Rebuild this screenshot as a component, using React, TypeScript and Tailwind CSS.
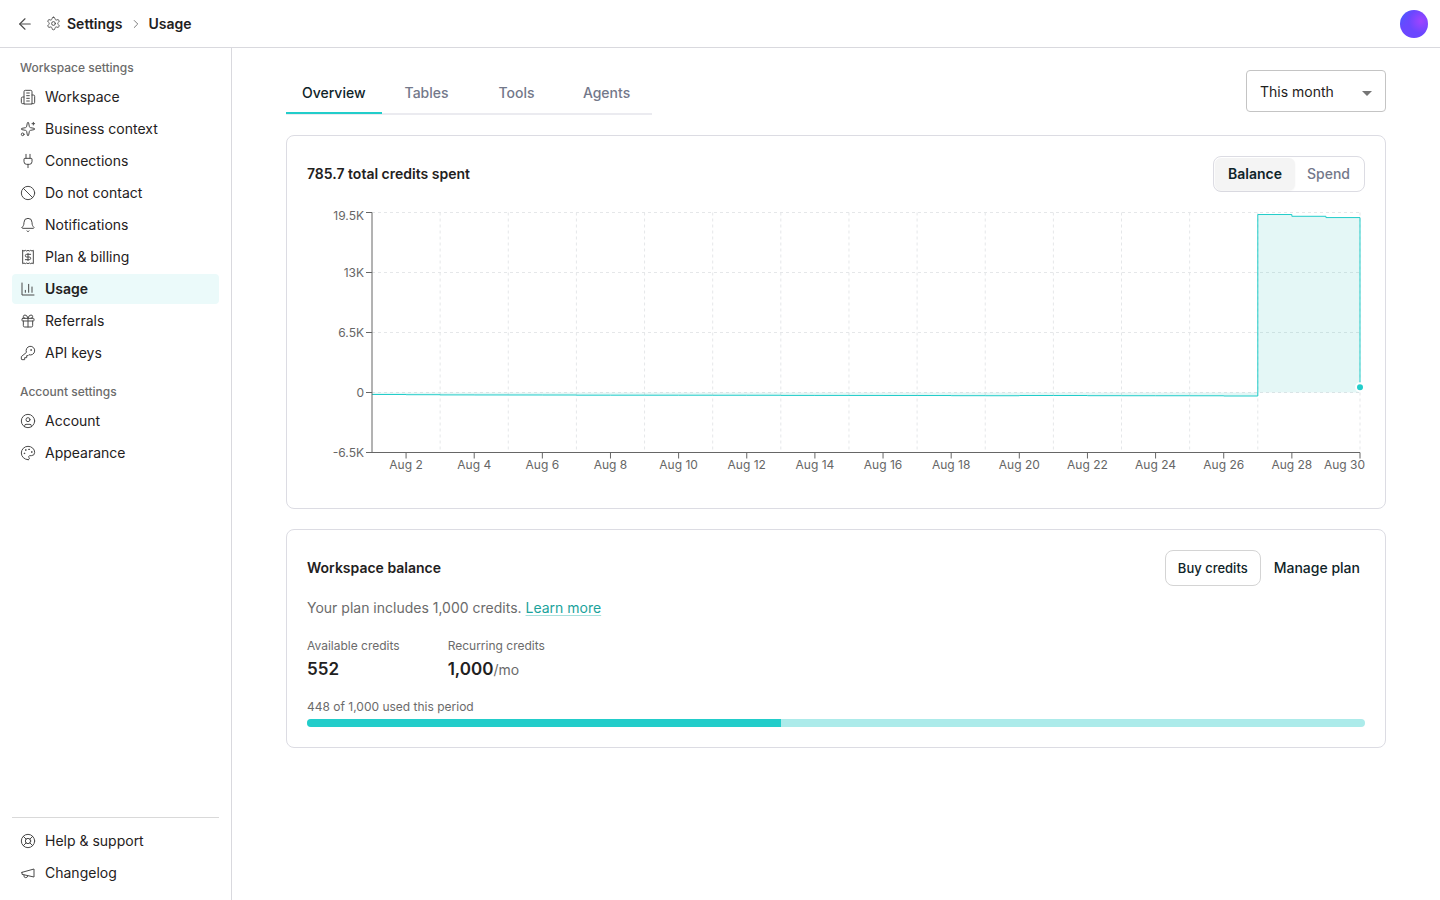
import { useState, type ReactNode } from "react";
import {
  ArrowLeft,
  Ban,
  Bell,
  ChevronRight,
  CircleUser,
  Gift,
  LifeBuoy,
  Palette,
  Plug,
  Sparkles,
} from "lucide-react";

function Glyph({ children, size = 16 }: { children: ReactNode; size?: number }) {
  return (
    <svg
      width={size}
      height={size}
      viewBox="0 0 24 24"
      fill="none"
      stroke="currentColor"
      strokeWidth="1.5"
      strokeLinecap="round"
      strokeLinejoin="round"
      aria-hidden="true"
    >
      {children}
    </svg>
  );
}

const gear = (
  <Glyph size={15}>
    <path d="M12.22 2h-.44a2 2 0 0 0-2 2v.18a2 2 0 0 1-1 1.73l-.43.25a2 2 0 0 1-2 0l-.15-.08a2 2 0 0 0-2.73.73l-.22.38a2 2 0 0 0 .73 2.73l.15.1a2 2 0 0 1 1 1.72v.51a2 2 0 0 1-1 1.74l-.15.09a2 2 0 0 0-.73 2.73l.22.38a2 2 0 0 0 2.73.73l.15-.08a2 2 0 0 1 2 0l.43.25a2 2 0 0 1 1 1.73V20a2 2 0 0 0 2 2h.44a2 2 0 0 0 2-2v-.18a2 2 0 0 1 1-1.73l.43-.25a2 2 0 0 1 2 0l.15.08a2 2 0 0 0 2.73-.73l.22-.39a2 2 0 0 0-.73-2.73l-.15-.08a2 2 0 0 1-1-1.74v-.5a2 2 0 0 1 1-1.74l.15-.09a2 2 0 0 0 .73-2.73l-.22-.38a2 2 0 0 0-2.73-.73l-.15.08a2 2 0 0 1-2 0l-.43-.25a2 2 0 0 1-1-1.73V4a2 2 0 0 0-2-2z" />
    <circle cx="12" cy="12" r="3" />
  </Glyph>
);

const building = (
  <Glyph>
    <path d="M6 22V4a2 2 0 0 1 2-2h8a2 2 0 0 1 2 2v18Z" />
    <path d="M6 12H4a2 2 0 0 0-2 2v6a2 2 0 0 0 2 2h2" />
    <path d="M18 9h2a2 2 0 0 1 2 2v9a2 2 0 0 1-2 2h-2" />
    <path d="M10 6h4M10 10h4M10 14h4M10 18h4" />
  </Glyph>
);

const receipt = (
  <Glyph>
    <path d="M4 2v20l2-1 2 1 2-1 2 1 2-1 2 1 2-1 2 1V2l-2 1-2-1-2 1-2-1-2 1-2-1-2 1Z" />
    <path d="M16 8h-6a2 2 0 1 0 0 4h4a2 2 0 1 1 0 4H8" />
    <path d="M12 17.5v-11" />
  </Glyph>
);

const chartColumn = (
  <Glyph>
    <path d="M3 3v18h18" />
    <path d="M18 17V9" />
    <path d="M13 17V5" />
    <path d="M8 17v-3" />
  </Glyph>
);

const key = (
  <Glyph>
    <path d="M2 18v3c0 .6.4 1 1 1h4v-3h3v-3h2l1.4-1.4a6.5 6.5 0 1 0-4-4Z" />
    <circle cx="16.5" cy="7.5" r=".5" fill="currentColor" />
  </Glyph>
);

const megaphone = (
  <Glyph>
    <path d="m3 11 18-5v12L3 14v-3z" />
    <path d="M11.6 16.8a3 3 0 1 1-5.8-1.6" />
  </Glyph>
);

const line = { size: 16, strokeWidth: 1.5, "aria-hidden": true } as const;

type Item = { label: string; icon: ReactNode; active?: boolean };

const workspaceItems: Item[] = [
  { label: "Workspace", icon: building },
  { label: "Business context", icon: <Sparkles {...line} /> },
  { label: "Connections", icon: <Plug {...line} /> },
  { label: "Do not contact", icon: <Ban {...line} /> },
  { label: "Notifications", icon: <Bell {...line} /> },
  { label: "Plan & billing", icon: receipt },
  { label: "Usage", icon: chartColumn, active: true },
  { label: "Referrals", icon: <Gift {...line} /> },
  { label: "API keys", icon: key },
];

const accountItems: Item[] = [
  { label: "Account", icon: <CircleUser {...line} /> },
  { label: "Appearance", icon: <Palette {...line} /> },
];

const footerItems: Item[] = [
  { label: "Help & support", icon: <LifeBuoy {...line} /> },
  { label: "Changelog", icon: megaphone },
];

function NavList({ items }: { items: Item[] }) {
  return (
    <ul className="flex flex-col gap-0.5">
      {items.map((item) => (
        <li key={item.label}>
          <a
            href="#"
            aria-current={item.active ? "page" : undefined}
            className={
              item.active
                ? "flex h-[30px] items-center gap-[9px] rounded bg-[#ebfafa] px-2 text-sm font-semibold text-[#1f2121]"
                : "flex h-[30px] items-center gap-[9px] rounded px-2 text-sm text-[#1f2121] hover:bg-gray-50"
            }
          >
            <span className="shrink-0 text-[#4a4a4a]">{item.icon}</span>
            {item.label}
          </a>
        </li>
      ))}
    </ul>
  );
}

// Plot geometry, in the chart's own units.
const LEFT = 65;
const RIGHT = 1053;
const TOP = 20.5;
const BOTTOM = 260.5;
const ZERO = 200.5;
const STEP = (RIGHT - LEFT) / 29;
const dayX = (day: number) => LEFT + (day - 1) * STEP;
const valueY = (value: number) => ZERO - (value / 6500) * 60;

// Closing balance for each day of August.
const balances = [
  -215, -240, -262, -266, -270, -274, -290, -292, -294, -296, -298, -300, -315, -318, -321, -324,
  -327, -345, -350, -325, -325, -345, -350, -352, -355, -380, 19280, 19090, 18950, 560,
];

const stepPath = balances
  .map((value, i) =>
    i === 0 ? `M${dayX(1)} ${valueY(value)}` : `H${dayX(i + 1)}V${valueY(value)}`,
  )
  .join("");

const yTicks = [
  { label: "19.5K", value: 19500, text: 24 },
  { label: "13K", value: 13000, text: 81 },
  { label: "6.5K", value: 6500, text: 141 },
  { label: "0", value: 0, text: 201 },
  { label: "-6.5K", value: -6500, text: 261 },
];

const gridDays = [3, 5, 7, 9, 11, 13, 15, 17, 19, 21, 23, 25, 27, 30];
const labelDays = [2, 4, 6, 8, 10, 12, 14, 16, 18, 20, 22, 24, 26, 28, 30];

function BalanceChart() {
  return (
    <svg
      viewBox="0 0 1058 296"
      className="block h-auto w-full overflow-visible"
      role="img"
      aria-label="Credit balance by day"
    >
      <g stroke="#e5e7e9" strokeDasharray="3 3">
        {yTicks.slice(0, 4).map((t) => (
          <line key={t.label} x1={LEFT} x2={RIGHT} y1={valueY(t.value)} y2={valueY(t.value)} />
        ))}
        {gridDays.map((d) => (
          <line key={d} x1={dayX(d)} x2={dayX(d)} y1={TOP} y2={BOTTOM} />
        ))}
      </g>
      <path d={`${stepPath}V${ZERO}H${LEFT}Z`} fill="#1ebcb8" fillOpacity="0.12" />
      <path d={stepPath} fill="none" stroke="#22cdca" strokeWidth="1" />
      <g stroke="#666666">
        <line x1={LEFT} x2={RIGHT} y1={BOTTOM} y2={BOTTOM} />
        <line x1={LEFT} x2={LEFT} y1={TOP} y2={BOTTOM} />
        {yTicks.map((t) => (
          <line key={t.label} x1={LEFT - 6} x2={LEFT} y1={valueY(t.value)} y2={valueY(t.value)} />
        ))}
        {labelDays.map((d) => (
          <line key={d} x1={dayX(d)} x2={dayX(d)} y1={BOTTOM} y2={BOTTOM + 6} />
        ))}
      </g>
      <g fill="#666666" fontSize="12">
        {yTicks.map((t) => (
          <text key={t.label} x={LEFT - 8} y={t.text + 4} textAnchor="end">
            {t.label}
          </text>
        ))}
        {labelDays.map((d) => (
          <text
            key={d}
            x={d === 30 ? 1058 : dayX(d)}
            y="277"
            textAnchor={d === 30 ? "end" : "middle"}
          >
            {`Aug ${d}`}
          </text>
        ))}
      </g>
      <circle cx={RIGHT} cy={valueY(560)} r="4" fill="#22cdca" stroke="#ffffff" strokeWidth="2" />
    </svg>
  );
}

const tabs = ["Overview", "Tables", "Tools", "Agents"];

export default function App() {
  const [tab, setTab] = useState("Overview");
  const [mode, setMode] = useState("Balance");
  const used = 448;
  const total = 1000;

  return (
    <div className="flex min-h-screen flex-col bg-white font-['Inter',sans-serif] text-sm text-[#1f2121]">
      <header className="flex h-12 items-center justify-between border-b border-[#d9d9de] px-3">
        <nav aria-label="Breadcrumb" className="flex items-center font-semibold">
          <button type="button" aria-label="Back" className="mr-2 p-1 text-[#4a4a4a]">
            <ArrowLeft size={18} strokeWidth={1.5} aria-hidden />
          </button>
          <a href="#" className="flex items-center gap-1.5">
            <span className="text-[#4a4a4a]">{gear}</span>
            Settings
          </a>
          <ChevronRight size={14} strokeWidth={1.5} className="mx-1.5 text-[#6b6b6b]" aria-hidden />
          <span aria-current="page">Usage</span>
        </nav>
        <button
          type="button"
          aria-label="Profile"
          className="size-7 rounded-full bg-[radial-gradient(circle_at_75%_40%,#a044ff_0%,#6b47ff_45%,transparent_75%),linear-gradient(160deg,#3b63ff_0%,#6b47ff_50%,#6b47ff_100%)]"
        />
      </header>

      <div className="flex flex-1">
        <aside className="flex w-[232px] shrink-0 flex-col justify-between border-r border-[#d9d9de] p-3">
          <nav aria-label="Settings">
            <h2 className="mb-1.5 px-2 text-xs font-medium text-[#6b6b6b]">Workspace settings</h2>
            <NavList items={workspaceItems} />
            <h2 className="mt-4 mb-1.5 px-2 text-xs font-medium text-[#6b6b6b]">Account settings</h2>
            <NavList items={accountItems} />
          </nav>
          <div className="border-t border-[#d9d9d9] pt-2">
            <NavList items={footerItems} />
          </div>
        </aside>

        <main className="min-w-0 flex-1 px-6 pt-[22px] pb-6">
          <div className="mx-auto flex max-w-[1100px] flex-col">
            <div className="flex items-start justify-between">
              <div role="tablist" className="flex h-[45px] border-b-2 border-[#ebebf0]">
                {tabs.map((name) => (
                  <button
                    key={name}
                    type="button"
                    role="tab"
                    aria-selected={tab === name}
                    onClick={() => setTab(name)}
                    className={
                      tab === name
                        ? "-mb-px min-w-[90px] border-b-2 border-[#22cdca] px-4 pt-[3px] font-medium text-[#0f2429]"
                        : "-mb-px min-w-[90px] border-b-2 border-transparent px-4 pt-[3px] font-medium text-[#73788a]"
                    }
                  >
                    {name}
                  </button>
                ))}
              </div>
              <div className="relative w-[140px]">
                <select
                  aria-label="Period"
                  className="h-[42px] w-full appearance-none rounded border border-[#c4c4c4] bg-white pt-0.5 pr-8 pl-[13px] text-sm text-[#1f2121]"
                >
                  <option>This month</option>
                  <option>Last month</option>
                </select>
                <svg
                  width="10"
                  height="5"
                  viewBox="0 0 10 5"
                  className="pointer-events-none absolute top-[21px] right-3.5 text-[#757575]"
                  aria-hidden="true"
                >
                  <path d="M0 0h10L5 5z" fill="currentColor" />
                </svg>
              </div>
            </div>

            <section className="mt-5 rounded-lg border border-[#dcdce3] p-5">
              <div className="flex items-center justify-between">
                <h2 className="font-semibold">785.7 total credits spent</h2>
                <div className="flex h-9 rounded-lg border border-[#dcdce3] p-px">
                  {["Balance", "Spend"].map((name) => (
                    <button
                      key={name}
                      type="button"
                      aria-pressed={mode === name}
                      onClick={() => setMode(name)}
                      className={
                        mode === name
                          ? "rounded-md bg-[#f4f4f4] px-[13px] font-semibold text-[#0f2429] shadow-xs"
                          : "pr-[13px] pl-3 font-medium text-[#73788a]"
                      }
                    >
                      {name}
                    </button>
                  ))}
                </div>
              </div>
              <BalanceChart />
            </section>

            <section className="mt-5 rounded-lg border border-[#dcdce3] p-5">
              <div className="flex items-center justify-between">
                <h2 className="font-semibold">Workspace balance</h2>
                <div className="flex items-center gap-2">
                  <button
                    type="button"
                    className="h-9 rounded-lg border border-[#d4d4d4] px-3 text-[13px] font-medium text-[#0f2429]"
                  >
                    Buy credits
                  </button>
                  <button type="button" className="h-9 px-[5px] font-medium text-[#0f2429]">
                    Manage plan
                  </button>
                </div>
              </div>
              <p className="mt-3 text-[#6b6b6b]">
                Your plan includes 1,000 credits.{" "}
                <a
                  href="#"
                  className="text-[#1ba39c] underline decoration-[#a5e0dd] decoration-1 underline-offset-2"
                >
                  Learn more
                </a>
              </p>
              <dl className="mt-5 flex gap-12">
                <div>
                  <dt className="text-xs text-[#6b6b6b]">Available credits</dt>
                  <dd className="mt-[3px] text-[17px] leading-6 font-semibold">552</dd>
                </div>
                <div>
                  <dt className="text-xs text-[#6b6b6b]">Recurring credits</dt>
                  <dd className="mt-[3px] text-[17px] leading-6 font-semibold">
                    1,000<span className="text-sm font-normal text-[#6b6b6b]">/mo</span>
                  </dd>
                </div>
              </dl>
              <p className="mt-[18px] text-xs text-[#6b6b6b]">448 of 1,000 used this period</p>
              <div
                role="progressbar"
                aria-label="Credits used this period"
                aria-valuenow={used}
                aria-valuemin={0}
                aria-valuemax={total}
                className="mt-1 h-2 overflow-hidden rounded-full bg-[#acebea]"
              >
                <div className="h-full bg-[#22cdca]" style={{ width: `${(used / total) * 100}%` }} />
              </div>
            </section>
          </div>
        </main>
      </div>
    </div>
  );
}
